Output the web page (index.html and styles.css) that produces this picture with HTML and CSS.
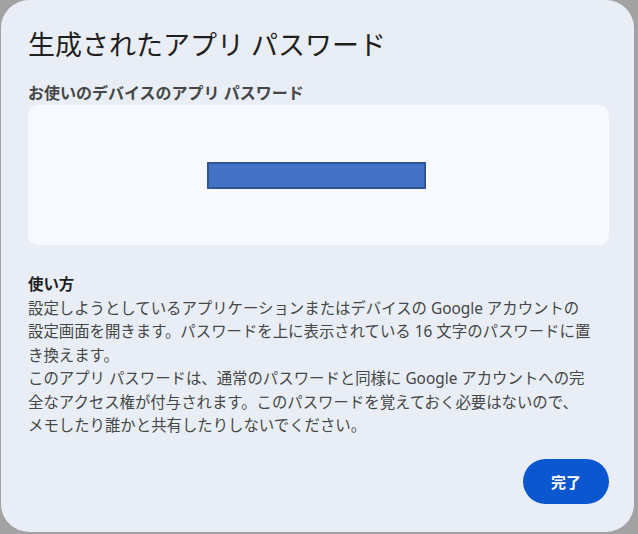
FILE: index.html
```html
<!DOCTYPE html>
<html lang="ja">
<head>
    <meta charset="utf-8">
    <title>生成されたアプリ パスワード</title>
    <link rel="stylesheet" href="styles.css">
</head>
<body>
    <div class="dialog">
        <h1 class="dialog-title">生成されたアプリ パスワード</h1>
        <div class="field-label">お使いのデバイスのアプリ パスワード</div>
        <div class="password-box">
            <div class="redacted"></div>
        </div>
        <div class="howto">
            <div class="howto-title">使い方</div>
            <p>設定しようとしているアプリケーションまたはデバイスの Google アカウントの<br>設定画面を開きます。パスワードを上に表示されている 16 文字のパスワードに置<br>き換えます。</p>
            <p>このアプリ パスワードは、通常のパスワードと同様に Google アカウントへの完<br>全なアクセス権が付与されます。このパスワードを覚えておく必要はないので、<br>メモしたり誰かと共有したりしないでください。</p>
        </div>
        <div class="actions">
            <button class="done-btn">完了</button>
        </div>
    </div>
</body>
</html>
```

FILE: styles.css
```css
html, body {
    margin: 0;
    height: 100%;
}
body {
    background: #a2a2a2;
    font-family: "Noto Sans", "Noto Sans CJK JP", sans-serif;
    overflow: hidden;
}
.dialog {
    box-sizing: border-box;
    width: 633px;
    height: 532px;
    margin-left: 1px;
    padding: 27px 25px 0 27px;
    background: #e9eef6;
    border-radius: 28px;
}
.dialog-title {
    margin: 0;
    font-size: 27px;
    line-height: 36px;
    font-weight: 400;
    color: #1f1f1f;
}
.field-label {
    margin-top: 20px;
    font-size: 16px;
    line-height: 20px;
    font-weight: 700;
    color: #444746;
}
.password-box {
    margin-top: 2px;
    height: 140px;
    background: #f8f9fe;
    border-radius: 10px;
    display: flex;
    align-items: center;
    justify-content: center;
}
.redacted {
    box-sizing: border-box;
    width: 219px;
    height: 27px;
    margin-right: 4px;
    background: #4472c4;
    border: 2px solid #2f5597;
}
.howto {
    margin-top: 28px;
    font-size: 15.4px;
    line-height: 23.4px;
    color: #444746;
    white-space: nowrap;
}
.howto-title {
    line-height: 24px;
    font-weight: 700;
    color: #1f1f1f;
}
.howto p {
    margin: 0;
}
.actions {
    display: flex;
    justify-content: flex-end;
    margin-top: 22px;
}
.done-btn {
    width: 86px;
    height: 45px;
    border: none;
    border-radius: 23px;
    background: #0b57d0;
    color: #fff;
    font-family: inherit;
    font-size: 15px;
    font-weight: 700;
}
```
